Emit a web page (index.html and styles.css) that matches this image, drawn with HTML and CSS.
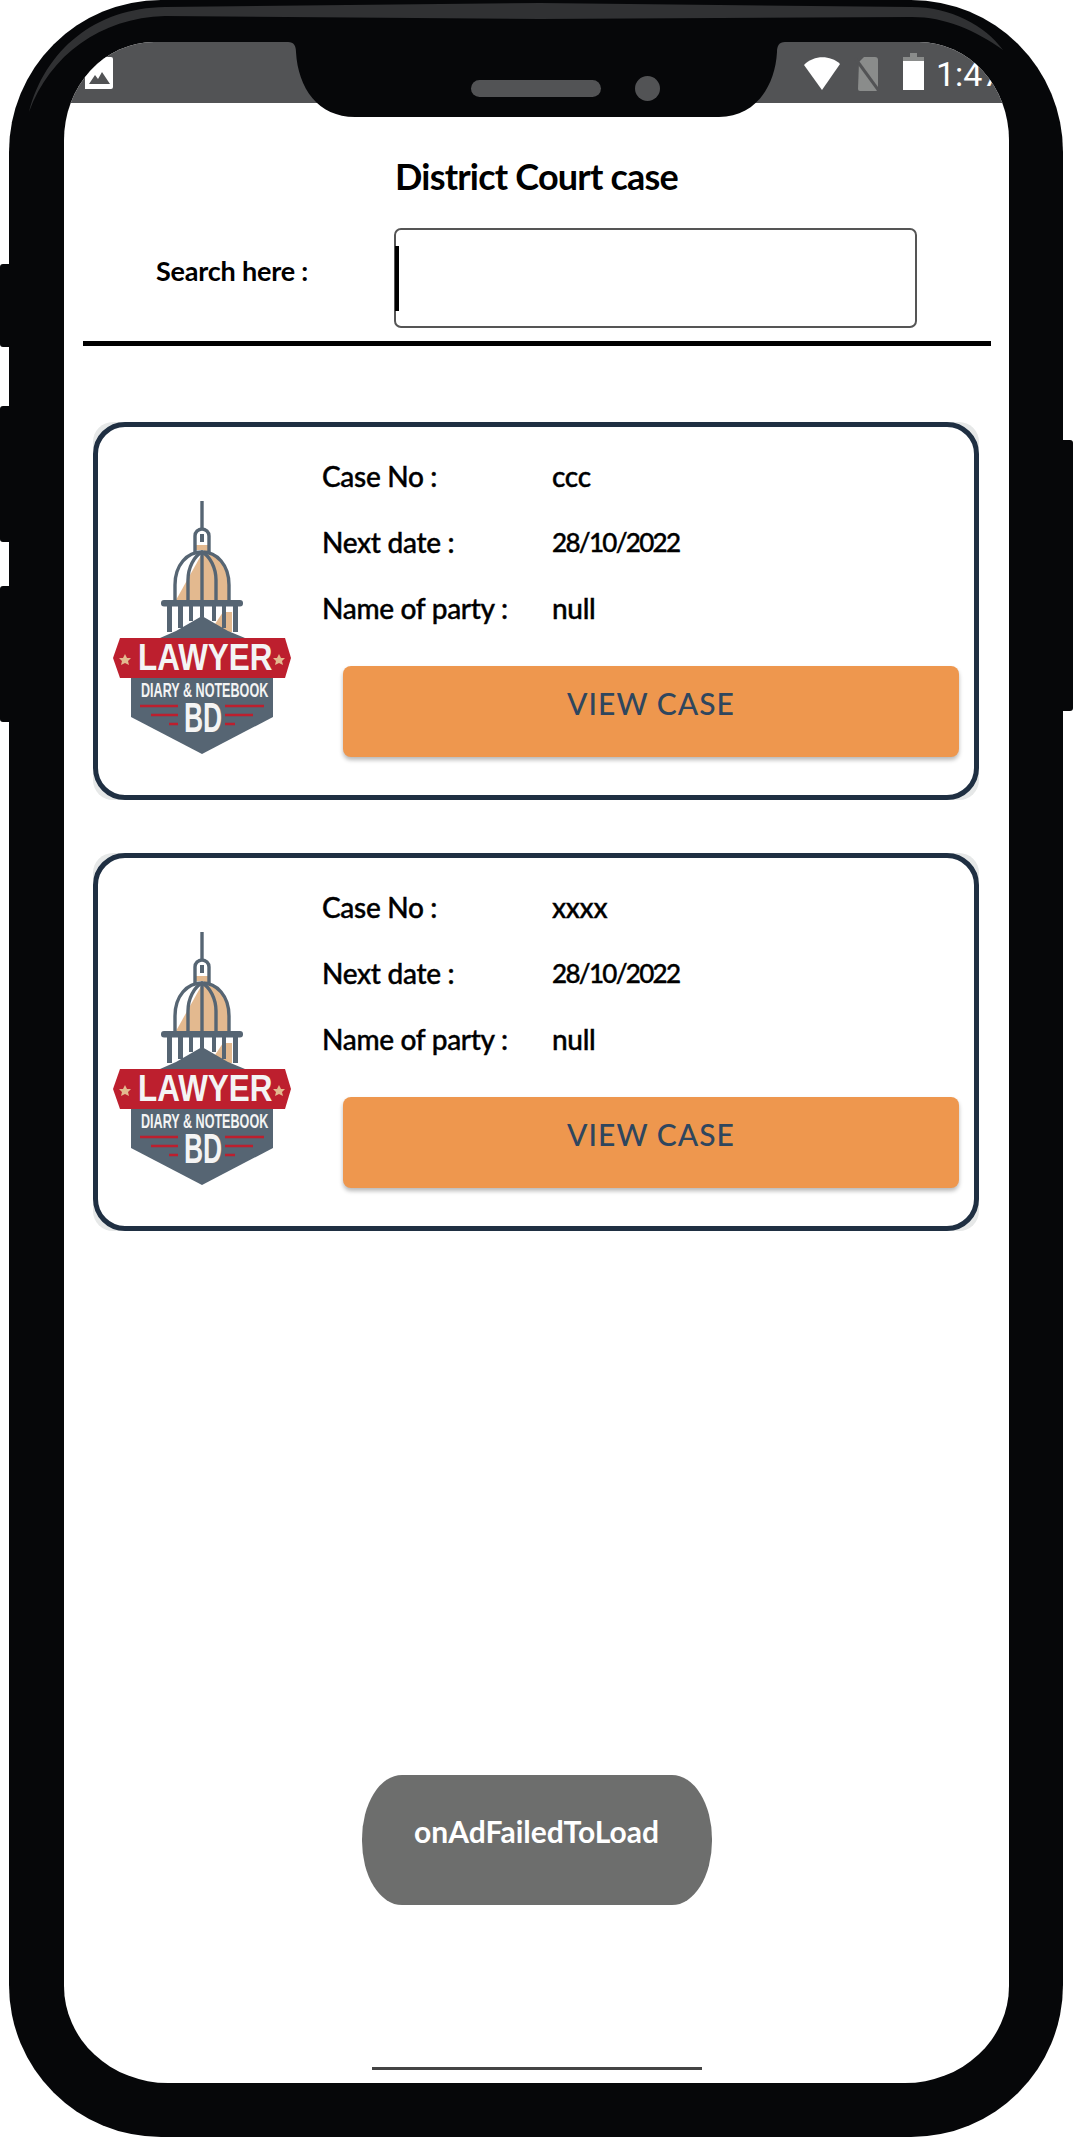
FILE: index.html
```html
<!DOCTYPE html>
<html lang="en">
<head>
<meta charset="utf-8">
<title>District Court case</title>
<link rel="stylesheet" href="styles.css">
</head>
<body>
<div class="device">
  <span class="side side-a"></span>
  <span class="side side-b"></span>
  <span class="side side-c"></span>
  <span class="side side-d"></span>
  <div class="phone">
    <div class="screen">
      <div class="statusbar">
        <svg class="st-image" viewBox="0 0 28 32"><path d="M0 32V13L11 0h15a2 2 0 0 1 2 2v28a2 2 0 0 1-2 2z" fill="#fff"/><path d="M4 27l6-9 3 4 4-7 8 12z" fill="#525355"/></svg>
        <div class="st-right">
          <svg class="st-wifi" viewBox="0 0 36 35"><path d="M0 10C10 0 26 0 36 9L18 35z" fill="#fff"/></svg>
          <svg class="st-sim" viewBox="0 0 26 35"><path d="M5 6l5-5h11a3 3 0 0 1 3 3v29a2 2 0 0 1-2 2H6a2 2 0 0 1-2-2z" fill="#8a8c8b"/><path d="M1 2l24 33" stroke="#525355" stroke-width="3"/></svg>
          <svg class="st-batt" viewBox="0 0 21 37"><path d="M7 0h7v4H7z" fill="#8a8c8b"/><path d="M0 4h21v8H0z" fill="#8a8c8b"/><path d="M0 8h21v29H0z" fill="#fff"/></svg>
          <span class="st-time">1:47</span>
        </div>
      </div>
      <h1 class="title">District Court case</h1>
      <div class="search">
        <label class="search-label">Search here :</label>
        <div class="search-box"><span class="caret"></span></div>
      </div>
      <div class="divider"></div>

      <div class="card-wrap">
        <article class="card">
          <svg class="logo" viewBox="0 0 200 280">
            <path d="M85 62V46a7 7 0 0 1 14 0v16z" fill="#e3b98f"/><path d="M85 38h14v17H85z" fill="#fff"/><path d="M65 110V95c0-20 12-33 27-33s27 13 27 33v15z" fill="#e3b98f"/><path d="M63 110V60h31L66 110z" fill="#fff"/><path d="M105 134l8-12h9v20h-17z" fill="#e3b98f"/>
            <g fill="none" stroke="#566573" stroke-width="3.4"><path d="M92 11v27" /><path d="M85 62V46a7 7 0 0 1 14 0v16" /><path d="M65 110V95c0-20 12-33 27-33s27 13 27 33v15" /><path d="M78 110V90c0-12 6-24 14-28 8 4 14 16 14 28v20" /><path d="M92 62v48" /></g>
            <path d="M90 44h4v8h-4z" fill="#566573"/>
            <rect x="51" y="110" width="82" height="6.5" rx="3" fill="#566573"/>
            <g fill="#566573"><rect x="57" y="116" width="5" height="26"/><rect x="68" y="116" width="5" height="22"/><rect x="79" y="116" width="4" height="15"/><rect x="90" y="116" width="4" height="11"/><rect x="102" y="116" width="4" height="15"/><rect x="112" y="116" width="4" height="22"/><rect x="123" y="116" width="5" height="26"/><path d="M50 148l16-7 26-15 26 15 17 7z"/><path d="M21 186h142v41l-71 37-71-37z"/></g>
            <path d="M10 148H175l6 20-6 20H10L3 168z" fill="#bd1f2e"/>
            <path d="M15 164l2 4h4l-3 3 1 4-4-2-4 2 1-4-3-3h4zM169 164l2 4h4l-3 3 1 4-4-2-4 2 1-4-3-3h4z" fill="#e3b98f"/>
            <text class="lg-a" transform="translate(28 180) scale(.85 1)">LAWYER</text>
            <text class="lg-b" transform="translate(31 207) scale(.6 1)">DIARY &amp; NOTEBOOK</text>
            <text class="lg-c" transform="translate(74 242) scale(.63 1)">BD</text>
            <path d="M30 216h38M115 216h39M41 225h27M115 225h28M59 234h9M115 234h10" stroke="#bd1f2e" stroke-width="2.4"/>
          </svg>
          <div class="info">
            <div class="row"><span class="label">Case No :</span><span class="value">ccc</span></div>
            <div class="row"><span class="label">Next date :</span><span class="value num">28/10/2022</span></div>
            <div class="row"><span class="label">Name of party :</span><span class="value">null</span></div>
            <button class="view">VIEW CASE</button>
          </div>
        </article>
      </div>

      <div class="card-wrap">
        <article class="card">
          <svg class="logo" viewBox="0 0 200 280">
            <path d="M85 62V46a7 7 0 0 1 14 0v16z" fill="#e3b98f"/><path d="M85 38h14v17H85z" fill="#fff"/><path d="M65 110V95c0-20 12-33 27-33s27 13 27 33v15z" fill="#e3b98f"/><path d="M63 110V60h31L66 110z" fill="#fff"/><path d="M105 134l8-12h9v20h-17z" fill="#e3b98f"/>
            <g fill="none" stroke="#566573" stroke-width="3.4"><path d="M92 11v27" /><path d="M85 62V46a7 7 0 0 1 14 0v16" /><path d="M65 110V95c0-20 12-33 27-33s27 13 27 33v15" /><path d="M78 110V90c0-12 6-24 14-28 8 4 14 16 14 28v20" /><path d="M92 62v48" /></g>
            <path d="M90 44h4v8h-4z" fill="#566573"/>
            <rect x="51" y="110" width="82" height="6.5" rx="3" fill="#566573"/>
            <g fill="#566573"><rect x="57" y="116" width="5" height="26"/><rect x="68" y="116" width="5" height="22"/><rect x="79" y="116" width="4" height="15"/><rect x="90" y="116" width="4" height="11"/><rect x="102" y="116" width="4" height="15"/><rect x="112" y="116" width="4" height="22"/><rect x="123" y="116" width="5" height="26"/><path d="M50 148l16-7 26-15 26 15 17 7z"/><path d="M21 186h142v41l-71 37-71-37z"/></g>
            <path d="M10 148H175l6 20-6 20H10L3 168z" fill="#bd1f2e"/>
            <path d="M15 164l2 4h4l-3 3 1 4-4-2-4 2 1-4-3-3h4zM169 164l2 4h4l-3 3 1 4-4-2-4 2 1-4-3-3h4z" fill="#e3b98f"/>
            <text class="lg-a" transform="translate(28 180) scale(.85 1)">LAWYER</text>
            <text class="lg-b" transform="translate(31 207) scale(.6 1)">DIARY &amp; NOTEBOOK</text>
            <text class="lg-c" transform="translate(74 242) scale(.63 1)">BD</text>
            <path d="M30 216h38M115 216h39M41 225h27M115 225h28M59 234h9M115 234h10" stroke="#bd1f2e" stroke-width="2.4"/>
          </svg>
          <div class="info">
            <div class="row"><span class="label">Case No :</span><span class="value">xxxx</span></div>
            <div class="row"><span class="label">Next date :</span><span class="value num">28/10/2022</span></div>
            <div class="row"><span class="label">Name of party :</span><span class="value">null</span></div>
            <button class="view">VIEW CASE</button>
          </div>
        </article>
      </div>

      <div class="toast">onAdFailedToLoad</div>
      <div class="homebar"></div>
    </div>
    <svg class="notch" viewBox="0 0 497 75"><path d="M0 0C6 0 8 4 8 10C10 46 30 75 67 75H431C466 75 487 46 489 10C489 4 491 0 497 0Z" fill="#060709"/></svg>
    <span class="speaker"></span>
    <span class="camera"></span>
    <svg class="sheen" viewBox="0 0 1054 120"><path d="M20 112C36 50 86 8 156 7L531 3L903 7C941 7 976 25 994 50C966 30 936 17 903 17L531 19L156 16C91 18 41 55 20 112Z" fill="#303133"/></svg>
  </div>
</div>
</body>
</html>
```
FILE: styles.css
```css
* { box-sizing: border-box; }
html, body { margin: 0; padding: 0; background: #fff; }
body { font-family: "Lato", "Liberation Sans", sans-serif; color: #000; }

.device { position: relative; width: 1073px; height: 2138px; padding-left: 9px; }
.side { position: absolute; background: #060709; }
.side-a { left: 0; top: 264px; width: 10px; height: 83px; border-radius: 3px 0 0 3px; }
.side-b { left: 0; top: 406px; width: 10px; height: 136px; border-radius: 3px 0 0 3px; }
.side-c { left: 0; top: 586px; width: 10px; height: 136px; border-radius: 3px 0 0 3px; }
.side-d { right: 0; top: 440px; width: 12px; height: 271px; border-radius: 0 3px 3px 0; }

.phone {
  position: relative;
  width: 1054px;
  height: 2137px;
  padding: 42px 54px 54px 55px;
  background: #060709;
  border-radius: 152px;
}
.screen {
  position: relative;
  width: 945px;
  height: 2041px;
  overflow: hidden;
  background: #fff;
  border-radius: 90px 90px 104px 104px / 98px 98px 97px 97px;
}

.statusbar { position: relative; height: 61px; background: #525355; display: flex; justify-content: space-between; }
.st-image { width: 28px; height: 32px; margin: 15px 0 0 21px; }
.st-right { display: flex; align-items: flex-start; }
.st-wifi { width: 36px; height: 35px; margin: 13px 0 0 0; }
.st-sim { width: 26px; height: 35px; margin: 14px 0 0 14px; }
.st-batt { width: 21px; height: 37px; margin: 11px 0 0 23px; }
.st-time { width: 73px; margin-left: 12px; padding-top: 13px; font: 34px/38px "Roboto", sans-serif; color: #fff; white-space: nowrap; }

.notch { position: absolute; left: 279px; top: 42px; width: 497px; height: 75px; }
.speaker { position: absolute; left: 462px; top: 80px; width: 130px; height: 17px; border-radius: 9px; background: #525355; }
.camera { position: absolute; left: 626px; top: 76px; width: 25px; height: 25px; border-radius: 50%; background: #525355; }
.sheen { position: absolute; left: 0; top: 0; width: 1054px; height: 120px; }

.title { margin: 50px 0 0; text-align: center; font-size: 36px; line-height: 46px; font-weight: 700; letter-spacing: -.8px; }
.search { display: flex; align-items: flex-start; padding-left: 92px; margin-top: 29px; }
.search-label { width: 238px; margin-top: 23px; font-size: 27px; line-height: 40px; font-weight: 700; letter-spacing: -.2px; }
.search-box { position: relative; width: 523px; height: 100px; border: 2px solid #555; border-radius: 7px; }
.caret { position: absolute; left: -1px; top: 16px; width: 4px; height: 65px; background: #000; }
.divider { height: 5px; margin: 13px 18px 0 19px; background: #000; }

.card-wrap { width: 886px; height: 378px; margin: 76px 0 0 29px; background: #e6e8e8; border-radius: 20px; }
.card-wrap + .card-wrap { margin-top: 53px; }
.card {
  display: flex;
  align-items: flex-start;
  height: 100%;
  padding: 0 14px 0 12px;
  background: #fff;
  border: 5px solid #1f2f42;
  border-radius: 32px;
}
.logo { flex: none; width: 200px; height: 280px; margin-top: 63px; }
.lg-a, .lg-b, .lg-c { font-family: "Liberation Sans", sans-serif; fill: #f4f4f4; font-weight: 700; }
.lg-a { font-size: 37px; }
.lg-b { font-size: 21px; }
.lg-c { font-size: 42px; }
.info { flex: 1; padding: 16px 0 0 12px; }
.row { display: flex; height: 66px; align-items: center; font-size: 28px; font-weight: 500; letter-spacing: -.3px; -webkit-text-stroke: .4px #000; }
.label { width: 230px; white-space: nowrap; }
.value { white-space: nowrap; }
.num { font-size: 26px; letter-spacing: -1.7px; }
.view {
  display: block;
  width: 616px;
  height: 91px;
  margin: 25px 0 0 21px;
  padding: 0 0 17px;
  border: 0;
  border-radius: 8px;
  background: #ee974e;
  color: #2f465e;
  font: 500 30px "Lato", sans-serif;
  letter-spacing: 1px;
  box-shadow: 0 3px 4px rgba(0,0,0,.28);
}

.toast {
  width: 350px;
  height: 130px;
  margin: 544px auto 0;
  padding-top: 36px;
  background: #6d6e6d;
  border-radius: 40px / 64px;
  color: #fff;
  text-align: center;
  font-size: 30px;
  line-height: 40px;
  font-weight: 700;
}
.homebar { width: 330px; height: 3px; margin: 162px 0 0 308px; background: #444; }
```
